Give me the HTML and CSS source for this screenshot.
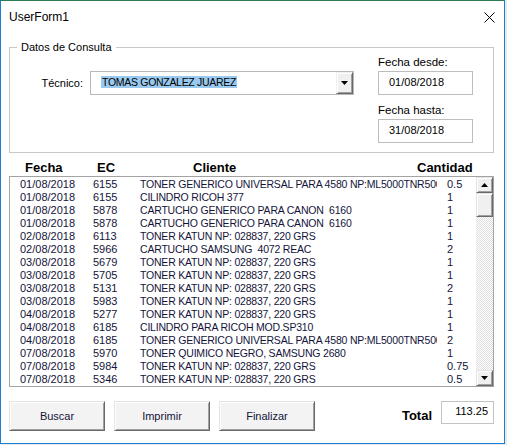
FILE: index.html
```html
<!DOCTYPE html>
<html lang="es">
<head>
<meta charset="utf-8">
<title>UserForm1</title>
<link rel="stylesheet" href="styles.css">
</head>
<body>
<div class="window">
  <div class="titlebar">
    <span class="title">UserForm1</span>
    <svg class="close" width="11" height="11" viewBox="0 0 11 11"><path d="M0.5 0.5 L10.5 10.5 M10.5 0.5 L0.5 10.5" stroke="#000" stroke-width="1" fill="none"/></svg>
  </div>
  <div class="client">
    <fieldset class="frame">
      <legend class="legend">Datos de Consulta</legend>
      <div class="frame-body">
        <div class="tec-row">
          <label class="tec-label">Técnico:</label>
          <div class="combo">
            <div class="combo-text"><span class="sel">TOMAS GONZALEZ JUAREZ</span></div>
            <div class="combo-btn"><svg width="7" height="4" viewBox="0 0 7 4"><path d="M0 0 H7 L3.5 4 Z" fill="#000"/></svg></div>
          </div>
        </div>
        <div class="dates">
          <div class="date-label">Fecha desde:</div>
          <div class="date-box">01/08/2018</div>
          <div class="date-label second">Fecha hasta:</div>
          <div class="date-box">31/08/2018</div>
        </div>
      </div>
    </fieldset>

    <div class="list-head">
      <span>Fecha</span><span>EC</span><span>Cliente</span><span>Cantidad</span>
    </div>

    <div class="list">
      <div class="rows">
        <div class="row"><span>01/08/2018</span><span>6155</span><span class="cli">TONER GENERICO UNIVERSAL PARA 4580 NP:ML5000TNR500</span><span class="qty">0.5</span></div>
        <div class="row"><span>01/08/2018</span><span>6155</span><span class="cli">CILINDRO RICOH 377</span><span class="qty">1</span></div>
        <div class="row"><span>01/08/2018</span><span>5878</span><span class="cli">CARTUCHO GENERICO PARA CANON  6160</span><span class="qty">1</span></div>
        <div class="row"><span>01/08/2018</span><span>5878</span><span class="cli">CARTUCHO GENERICO PARA CANON  6160</span><span class="qty">1</span></div>
        <div class="row"><span>02/08/2018</span><span>6113</span><span class="cli">TONER KATUN NP: 028837, 220 GRS</span><span class="qty">1</span></div>
        <div class="row"><span>02/08/2018</span><span>5966</span><span class="cli">CARTUCHO SAMSUNG  4072 REAC</span><span class="qty">2</span></div>
        <div class="row"><span>03/08/2018</span><span>5679</span><span class="cli">TONER KATUN NP: 028837, 220 GRS</span><span class="qty">1</span></div>
        <div class="row"><span>03/08/2018</span><span>5705</span><span class="cli">TONER KATUN NP: 028837, 220 GRS</span><span class="qty">1</span></div>
        <div class="row"><span>03/08/2018</span><span>5131</span><span class="cli">TONER KATUN NP: 028837, 220 GRS</span><span class="qty">2</span></div>
        <div class="row"><span>03/08/2018</span><span>5983</span><span class="cli">TONER KATUN NP: 028837, 220 GRS</span><span class="qty">1</span></div>
        <div class="row"><span>04/08/2018</span><span>5277</span><span class="cli">TONER KATUN NP: 028837, 220 GRS</span><span class="qty">1</span></div>
        <div class="row"><span>04/08/2018</span><span>6185</span><span class="cli">CILINDRO PARA RICOH MOD.SP310</span><span class="qty">1</span></div>
        <div class="row"><span>04/08/2018</span><span>6185</span><span class="cli">TONER GENERICO UNIVERSAL PARA 4580 NP:ML5000TNR500</span><span class="qty">2</span></div>
        <div class="row"><span>07/08/2018</span><span>5970</span><span class="cli">TONER QUIMICO NEGRO, SAMSUNG 2680</span><span class="qty">1</span></div>
        <div class="row"><span>07/08/2018</span><span>5984</span><span class="cli">TONER KATUN NP: 028837, 220 GRS</span><span class="qty">0.75</span></div>
        <div class="row"><span>07/08/2018</span><span>5346</span><span class="cli">TONER KATUN NP: 028837, 220 GRS</span><span class="qty">0.5</span></div>
      </div>
      <div class="vscroll">
        <div class="sbtn"><svg width="7" height="4" viewBox="0 0 7 4"><path d="M0 4 H7 L3.5 0 Z" fill="#000"/></svg></div>
        <div class="thumb"></div>
        <div class="track"></div>
        <div class="sbtn"><svg width="7" height="4" viewBox="0 0 7 4"><path d="M0 0 H7 L3.5 4 Z" fill="#000"/></svg></div>
      </div>
    </div>

    <div class="bottom">
      <div class="buttons">
        <button class="btn">Buscar</button>
        <button class="btn">Imprimir</button>
        <button class="btn">Finalizar</button>
      </div>
      <div class="total">
        <span class="total-label">Total</span>
        <div class="total-box">113.25</div>
      </div>
    </div>
  </div>
</div>
</body>
</html>
```

FILE: styles.css
```css
html, body {
  margin: 0;
  padding: 0;
}
body {
  width: 507px;
  height: 445px;
  overflow: hidden;
  background: #e9e9e9;
  font-family: "Liberation Sans", Arial, sans-serif;
  font-size: 11px;
  color: #000;
}
.window {
  width: 503px;
  height: 442px;
  border: 1px solid #1a7fd4;
  border-top-color: #2e7b52;
  background: #fff;
  display: flex;
  flex-direction: column;
}
.titlebar {
  height: 32px;
  display: flex;
  align-items: center;
  justify-content: space-between;
  padding: 0 9px 0 8px;
}
.title {
  font-size: 12px;
  color: #000;
}
.close {
  display: block;
}
.client {
  padding: 7px 10px 0 8px;
}
.frame {
  margin: 0;
  padding: 0;
  border: 1px solid #c8c8c8;
  min-width: 0;
}
.legend {
  margin-left: 7px;
  padding: 0 4px;
  line-height: 14px;
  font-size: 11px;
}
.frame-body {
  display: flex;
  justify-content: space-between;
  align-items: flex-start;
  padding: 1px 20px 9px 20px;
}
.tec-row {
  display: flex;
  align-items: center;
  margin-top: 16px;
}
.tec-label {
  width: 60px;
  box-sizing: border-box;
  padding-right: 7px;
  text-align: right;
  font-size: 11px;
}
.combo {
  width: 264px;
  height: 24px;
  box-sizing: border-box;
  border: 1px solid #b9b9b9;
  display: flex;
}
.combo-text {
  flex: 1;
  padding: 4px 0 0 10px;
}
.sel {
  display: inline-block;
  background: #99c9ef;
  line-height: 12px;
  font-size: 10.5px;
  letter-spacing: -0.3px;
  padding: 0 1px;
}
.combo-btn {
  width: 17px;
  box-sizing: border-box;
  background: #f0f0f0;
  border-top: 1px solid #f0f0f0;
  border-left: 1px solid #f0f0f0;
  border-right: 1px solid #696969;
  border-bottom: 1px solid #696969;
  box-shadow: inset 1px 1px #fff, inset -1px -1px #a0a0a0;
  display: flex;
  align-items: center;
  justify-content: center;
}
.combo-btn svg, .sbtn svg {
  display: block;
}
.dates {
  width: 95px;
  display: flex;
  flex-direction: column;
}
.date-label {
  line-height: 14px;
  font-size: 11.5px;
  margin-bottom: 2px;
}
.date-label.second {
  margin-top: 8px;
}
.date-box {
  height: 24px;
  box-sizing: border-box;
  border: 1px solid #bdbdbd;
  padding: 3px 0 0 10px;
  line-height: 14px;
  font-size: 11px;
}
.list-head {
  margin-top: 6px;
  height: 17px;
  line-height: 17px;
  display: grid;
  grid-template-columns: 72px 96px 224px auto;
  padding-left: 16px;
  font-weight: bold;
  font-size: 13px;
}
.list {
  height: 211px;
  box-sizing: border-box;
  border: 1px solid #a3a3a3;
  display: flex;
}
.rows {
  flex: 1;
  min-width: 0;
  overflow: hidden;
  padding-top: 1px;
}
.row {
  height: 13px;
  line-height: 13px;
  display: grid;
  grid-template-columns: 73px 47px 297px auto;
  padding-left: 10px;
  font-size: 11px;
  color: #14143a;
  white-space: pre;
}
.cli {
  overflow: hidden;
  font-size: 10.5px;
  letter-spacing: -0.2px;
}
.qty {
  padding-left: 10px;
}
.vscroll {
  width: 17px;
  display: flex;
  flex-direction: column;
}
.sbtn, .thumb {
  box-sizing: border-box;
  background: #f0f0f0;
  border-top: 1px solid #e3e3e3;
  border-left: 1px solid #e3e3e3;
  border-right: 1px solid #696969;
  border-bottom: 1px solid #696969;
  box-shadow: inset 1px 1px #fff, inset -1px -1px #a0a0a0;
}
.sbtn {
  height: 16px;
  display: flex;
  align-items: center;
  justify-content: center;
}
.thumb {
  height: 24px;
}
.track {
  flex: 1;
  background: repeating-conic-gradient(#dedede 0 25%, #fff 0 50%) 0 0 / 2px 2px;
}
.bottom {
  margin-top: 14px;
  display: flex;
  justify-content: space-between;
  align-items: flex-start;
}
.buttons {
  display: flex;
  gap: 9px;
}
.btn {
  width: 96px;
  height: 30px;
  box-sizing: border-box;
  margin: 0;
  padding: 0;
  font-family: "Liberation Sans", Arial, sans-serif;
  font-size: 11px;
  color: #14143a;
  background: #f3f3f3;
  border-top: 1px solid #e3e3e3;
  border-left: 1px solid #e3e3e3;
  border-right: 1px solid #696969;
  border-bottom: 1px solid #696969;
  box-shadow: inset 1px 1px #fff, inset -1px -1px #a0a0a0;
  border-radius: 0;
}
.total {
  display: flex;
  align-items: flex-start;
}
.total-label {
  line-height: 30px;
  font-weight: bold;
  font-size: 13px;
  margin-right: 9px;
}
.total-box {
  width: 53px;
  height: 23px;
  box-sizing: border-box;
  border: 1px solid #c3c3c3;
  text-align: right;
  padding: 2px 5px 0 0;
  line-height: 14px;
  font-size: 11px;
}
```
